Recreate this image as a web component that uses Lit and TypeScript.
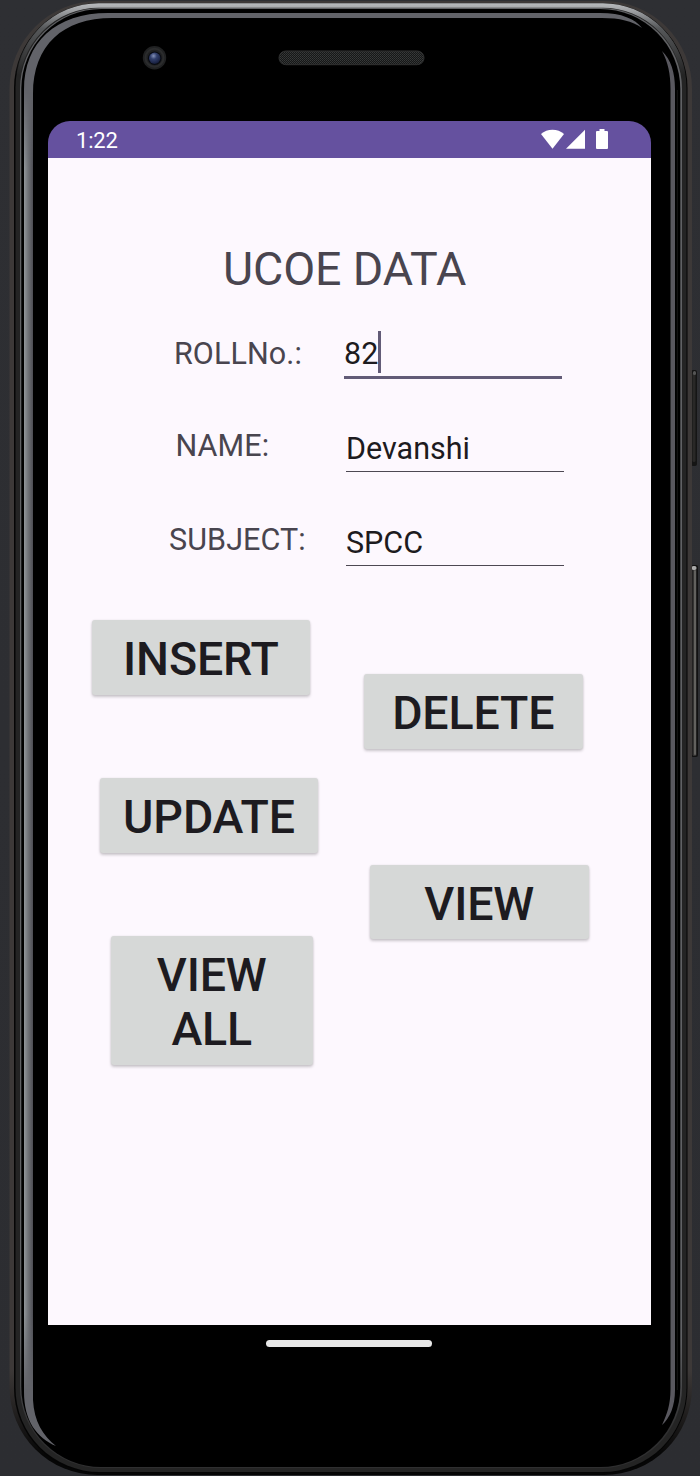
import { LitElement, html, css, svg } from "lit";
import { customElement, state } from "lit/decorators.js";

/** Hardware shell of the handset: rails, bezel highlights, camera, speaker. */
@customElement("device-shell")
class DeviceShell extends LitElement {
  static styles = css`
    :host { display: block; width: 700px; height: 1476px; }
    svg { display: block; }
  `;

  private sideButtons() {
    return svg`
      <rect x="691" y="370" width="6" height="96" rx="2" fill="#151515"/>
      <rect x="692.5" y="372" width="3" height="90" rx="1.5" fill="#292827"/>
      <rect x="693" y="371" width="3" height="4" rx="1.5" fill="#555"/>
      <rect x="691" y="565" width="7" height="192" rx="2" fill="#111"/>
      <rect x="692.5" y="566" width="4" height="190" rx="1.5" fill="#343332"/>
      <rect x="694" y="570" width="2" height="185" rx="1" fill="#62615e"/>
      <rect x="691.5" y="566" width="5" height="4" rx="2" fill="#aaa"/>`;
  }

  render() {
    return html`<svg width="700" height="1476" viewBox="0 0 700 1476">
      <defs>
        <linearGradient id="bg" x1="0" y1="0" x2="0" y2="1">
          <stop offset="0" stop-color="#2e2f33"/><stop offset="1" stop-color="#2c2d31"/>
        </linearGradient>
        <linearGradient id="silver" x1="0" y1="0" x2="1" y2="0">
          <stop offset="0" stop-color="#92979b"/><stop offset=".4" stop-color="#74777c"/><stop offset="1" stop-color="#4d4d54"/>
        </linearGradient>
        <linearGradient id="fade" x1="0" y1="0" x2="0" y2="1">
          <stop offset="0" stop-color="#000"/><stop offset=".06" stop-color="#fff"/><stop offset=".94" stop-color="#fff"/><stop offset="1" stop-color="#000"/>
        </linearGradient>
        <mask id="fadeMask" maskUnits="userSpaceOnUse" x="24" y="90" width="9" height="1302"><rect x="24" y="90" width="9" height="1302" fill="url(#fade)"/></mask>
        <linearGradient id="edge" gradientUnits="userSpaceOnUse" x1="0" y1="1370" x2="0" y2="1455">
          <stop offset="0" stop-color="#3d3938"/><stop offset="1" stop-color="#060606"/>
        </linearGradient>
        <linearGradient id="rim" gradientUnits="userSpaceOnUse" x1="0" y1="1340" x2="0" y2="1430">
          <stop offset="0" stop-color="#606164"/><stop offset="1" stop-color="#2f2f30"/>
        </linearGradient>
        <linearGradient id="shine" gradientUnits="userSpaceOnUse" x1="0" y1="3" x2="0" y2="75">
          <stop offset="0" stop-color="#b9bbbe"/><stop offset=".12" stop-color="#9b9da0"/><stop offset=".35" stop-color="#56585a"/><stop offset="1" stop-color="#56585a" stop-opacity="0"/>
        </linearGradient>
        <radialGradient id="lens" cx=".4" cy=".3" r=".8">
          <stop offset="0" stop-color="#8592b8"/><stop offset=".35" stop-color="#33416e"/><stop offset=".8" stop-color="#1a2344"/><stop offset="1" stop-color="#0b0f20"/>
        </radialGradient>
        <pattern id="mesh" width="2" height="2" patternUnits="userSpaceOnUse">
          <rect width="2" height="2" fill="#161717"/><rect width="1" height="1" fill="#383a3a"/><rect x="1" y="1" width="1" height="1" fill="#303232"/>
        </pattern>
      </defs>
      <rect width="700" height="1476" fill="url(#bg)"/>
      ${this.sideButtons()}
      <rect x="9.5" y="1" width="682.5" height="1474" rx="88" fill="url(#edge)"/>
      <rect x="14" y="3" width="673.5" height="1470" rx="85" fill="#050505"/>
      <rect x="15.5" y="3.5" width="671" height="1468.5" rx="84" fill="#242424"/>
      <rect x="20" y="8" width="662" height="1460" rx="81" fill="url(#rim)"/>
      <rect x="21.3" y="9" width="659" height="1458" rx="80" fill="#000"/>
      <path d="M16.5 89.5A82 84 0 0 1 98.5 5.5H603A82 84 0 0 1 685 89.5" fill="none" stroke="url(#shine)" stroke-width="4.5"/>
      <path d="M24 90C24 42 56 13 108 13H600C622 13 635 19 642 28C632 21 620 18 602 18H112C63 18 33 45 33 94V1400C34 1421 43 1436 56 1446C37 1438 24 1421 24 1392Z" fill="#626369"/>
      <rect x="24" y="90" width="9" height="1302" fill="url(#silver)" mask="url(#fadeMask)"/>
      <path d="M662 51C671 60 675 72 675 89V1390C675 1406 670 1418 662 1425C667 1414 670.5 1405 670.5 1389V89C670.5 74 668 62 662 51Z" fill="#59585f"/>
      <path d="M677.3 90V1390" stroke="#171717"/>
      <circle cx="154.5" cy="57.7" r="11.7" fill="#202122"/>
      <circle cx="154.5" cy="57.7" r="9" fill="none" stroke="#2b2c2d" stroke-width="2"/>
      <circle cx="154.7" cy="58.2" r="6.8" fill="#080b12"/>
      <circle cx="154.7" cy="58.2" r="5.7" fill="url(#lens)"/>
      <rect x="279" y="51" width="145" height="13.7" rx="6.8" fill="url(#mesh)" stroke="#303131"/>
    </svg>`;
  }
}

@customElement("app-root")
class AppRoot extends LitElement {
  @state() private fields = [
    { key: "roll", label: "ROLLNo.:", value: "82", active: true },
    { key: "name", label: "NAME:", value: "Devanshi", active: false },
    { key: "subject", label: "SUBJECT:", value: "SPCC", active: false },
  ];

  static styles = css`
    :host { display: block; width: 700px; height: 1476px; position: relative; overflow: hidden; font-family: Roboto, sans-serif; }
    * { box-sizing: border-box; }
    device-shell { position: absolute; inset: 0; }
    .face { position: relative; padding: 121px 49px 0 48px; display: flex; flex-direction: column; align-items: center; }
    .screen { width: 603px; height: 1204px; background: linear-gradient(#65519f 37px, #fdf8fe 37px); border-radius: 22px 22px 0 0; overflow: hidden; }
    .status { height: 37px; color: #fff; display: flex; justify-content: space-between; padding: 0 42px 0 28px; font-size: 22px; line-height: 39px; letter-spacing: -0.2px; }
    .status svg { display: block; margin-top: 8px; }
    h1 { margin: 84px 0 0 175px; font-weight: 400; font-size: 46.5px; line-height: 54px; color: #49454f; white-space: nowrap; letter-spacing: -0.1px; }
    .form { margin-top: 35px; }
    .row { display: flex; height: 94px; }
    .label { width: 296px; font-size: 30.5px; line-height: 36px; color: #49454f; white-space: nowrap; padding: 5px 0 0 126px; letter-spacing: 0.08px; }
    .name .label { padding-left: 127.5px; padding-top: 3px; }
    .subject .label { padding-left: 121px; padding-top: 3px; }
    .name .label, .subject .label { width: 298px; }
    .field { width: 218px; height: 47px; padding-top: 6px; font-size: 30.5px; line-height: 36px; color: #1d1b20; border-bottom: 1.5px solid #4d4953; display: flex; }
    .field.active { height: 48px; padding-top: 0; border-bottom: 3px solid #625b77; }
    .active .value { padding-top: 5px; }
    .caret { width: 3px; height: 42px; background: #625b77; }
    .actions { display: flex; margin-top: 7px; }
    .left { width: 316px; }
    .left, .right { display: flex; flex-direction: column; align-items: flex-start; }
    button { font: 500 46.5px/54px Roboto, sans-serif; letter-spacing: -0.15px; color: #1d1b20; background: #d6d8d7; border: 0; padding: 3px 0 0; width: 218.5px; height: 74.7px; border-radius: 3px; box-shadow: 0 2px 3px rgba(0,0,0,.2), 0 0 2px rgba(0,0,0,.1); white-space: nowrap; }
    .insert { margin-left: 43.7px; }
    .update { margin: 83.5px 0 0 51.7px; }
    .all { margin: 83.5px 0 0 62.5px; width: 202.5px; height: 128.5px; white-space: normal; padding: 3px 30px 0; }
    .delete { margin-top: 54px; }
    .view { margin: 116px 0 0 6px; }
    .home { width: 166px; height: 6.5px; border-radius: 4px; background: #e8e8e8; margin: 15px 1px 0 0; }
  `;

  render() {
    return html`
      <device-shell></device-shell>
      <div class="face">
        <main class="screen">
          <div class="status">
            <span>1:22</span>
            <svg width="68" height="21" viewBox="0 0 68 21" fill="#fff">
              <path d="M0 5C6-.8 17-.8 23 5L11.5 19.8Z"/>
              <path d="M25 19.8L44 .8V19.8Z"/>
              <path d="M58.5 0h5v2H66q1 0 1 1V19q0 1-1 1H56q-1 0-1-1V3q0-1 1-1h2.5Z"/>
            </svg>
          </div>
          <h1>UCOE DATA</h1>
          <section class="form">
            ${this.fields.map((f) => html`
              <div class="row ${f.key}">
                <div class="label">${f.label}</div>
                <div class="field ${f.active ? "active" : ""}">
                  <span class="value">${f.value}</span>${f.active ? html`<span class="caret"></span>` : ""}
                </div>
              </div>`)}
          </section>
          <section class="actions">
            <div class="left">
              <button class="insert">INSERT</button>
              <button class="update">UPDATE</button>
              <button class="all">VIEW ALL</button>
            </div>
            <div class="right">
              <button class="delete">DELETE</button>
              <button class="view">VIEW</button>
            </div>
          </section>
        </main>
        <div class="home"></div>
      </div>`;
  }
}
